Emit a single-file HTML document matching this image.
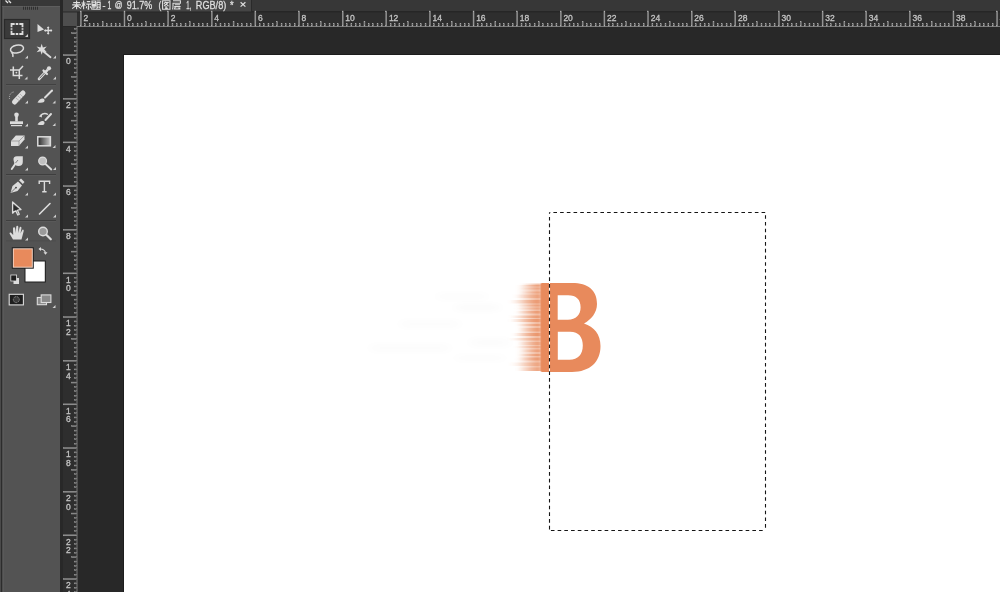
<!DOCTYPE html>
<html><head><meta charset="utf-8">
<style>
html,body{margin:0;padding:0;width:1000px;height:592px;overflow:hidden;background:#282828;}
body{position:relative;font-family:"Liberation Sans",sans-serif;}
svg{position:absolute;left:0;top:0;}
text{-webkit-font-smoothing:antialiased;}
</style></head><body>
<svg width="1000" height="592" viewBox="0 0 1000 592">
  <rect x="0" y="0" width="1000" height="592" fill="#282828"/>
  <rect x="123" y="54" width="877" height="538" fill="#1c1c1c"/>
  <rect x="124" y="55" width="876" height="537" fill="#ffffff"/>
<rect x="437" y="293" width="50" height="7" fill="#000" opacity="0.012" filter="url(#bl2)"/>
<rect x="455" y="304" width="45" height="7" fill="#000" opacity="0.014" filter="url(#bl2)"/>
<rect x="400" y="320" width="60" height="8" fill="#000" opacity="0.012" filter="url(#bl2)"/>
<rect x="370" y="344" width="80" height="8" fill="#000" opacity="0.01" filter="url(#bl2)"/>
<rect x="470" y="338" width="40" height="9" fill="#000" opacity="0.012" filter="url(#bl2)"/>
<rect x="455" y="355" width="50" height="6" fill="#000" opacity="0.012" filter="url(#bl2)"/>
<defs><linearGradient id="sm" x1="0" x2="1"><stop offset="0" stop-color="#e88a5c" stop-opacity="0"/><stop offset="0.4" stop-color="#e88a5c" stop-opacity="0.4"/><stop offset="0.75" stop-color="#e88a5c" stop-opacity="0.8"/><stop offset="1" stop-color="#e88a5c" stop-opacity="0.95"/></linearGradient><filter id="bl2" x="-50%" y="-100%" width="200%" height="300%"><feGaussianBlur stdDeviation="6 3"/></filter><filter id="bl" x="-20%" y="-50%" width="140%" height="200%"><feGaussianBlur stdDeviation="2 0.7"/></filter></defs>
<g filter="url(#bl)"><rect x="518" y="285" width="24" height="86" fill="url(#sm)" opacity="0.7"/><rect x="521.3" y="283.5" width="20.7" height="3" fill="url(#sm)" opacity="0.67"/><rect x="519.7" y="287.5" width="22.3" height="2" fill="url(#sm)" opacity="0.50"/><rect x="520.8" y="291.5" width="21.2" height="2" fill="url(#sm)" opacity="0.57"/><rect x="514.4" y="294.5" width="27.6" height="3.5" fill="url(#sm)" opacity="0.58"/><rect x="509.8" y="300.0" width="32.2" height="3.5" fill="url(#sm)" opacity="0.76"/><rect x="516.5" y="304.5" width="25.5" height="2" fill="url(#sm)" opacity="0.67"/><rect x="516.2" y="307.5" width="25.8" height="2" fill="url(#sm)" opacity="0.52"/><rect x="516.0" y="311.0" width="26.0" height="2.5" fill="url(#sm)" opacity="0.76"/><rect x="510.3" y="315.5" width="31.7" height="2.5" fill="url(#sm)" opacity="0.76"/><rect x="510.3" y="319.0" width="31.7" height="3" fill="url(#sm)" opacity="0.84"/><rect x="517.0" y="324.0" width="25.0" height="2" fill="url(#sm)" opacity="0.72"/><rect x="519.1" y="328.0" width="22.9" height="3.5" fill="url(#sm)" opacity="0.71"/><rect x="512.9" y="333.0" width="29.1" height="3" fill="url(#sm)" opacity="0.89"/><rect x="510.1" y="338.0" width="31.9" height="2.5" fill="url(#sm)" opacity="0.62"/><rect x="518.5" y="342.0" width="23.5" height="3" fill="url(#sm)" opacity="0.61"/><rect x="515.7" y="346.0" width="26.3" height="2" fill="url(#sm)" opacity="0.54"/><rect x="521.1" y="349.5" width="20.9" height="2.5" fill="url(#sm)" opacity="0.68"/><rect x="518.9" y="354.0" width="23.1" height="2" fill="url(#sm)" opacity="0.77"/><rect x="518.0" y="357.5" width="24.0" height="3" fill="url(#sm)" opacity="0.78"/><rect x="509.9" y="362.5" width="32.1" height="3.5" fill="url(#sm)" opacity="0.50"/><rect x="518.1" y="367.5" width="23.9" height="3.5" fill="url(#sm)" opacity="0.49"/></g>
<rect x="540.5" y="283.5" width="2" height="88" fill="#e88a5c" opacity="0.9"/>
<path d="M541.5,283 H572 C588,283 597,290 597,304 C597,313 591,319.5 584,323.5 C594,327 600.5,334 600.5,346 C600.5,362 590,371.9 572,371.9 H541.5 Z M557.7,295.2 H568 C576.5,295.2 580.6,299.5 580.6,307.3 C580.6,315 576,319.7 568,319.7 H557.7 Z M557.8,331.8 H570 C579,331.8 582.8,337.5 582.8,345.6 C582.8,354.5 578,359.8 569.5,359.8 H557.8 Z" fill="#e88a5c" fill-rule="evenodd"/>
  <rect x="549.5" y="212.5" width="216" height="318" fill="none" stroke="#ffffff" stroke-width="1"/>
  <g stroke="#151515" stroke-width="1.1" stroke-dasharray="3.6,3.115" fill="none">
    <path d="M549.5,212.5 H765.5" stroke-dashoffset="2.82"/>
    <path d="M549.5,212.5 V530.5" stroke-dashoffset="2.31"/>
    <path d="M765.5,212.5 V530.5" stroke-dashoffset="4.0"/>
    <path d="M549.5,530.5 H765.5" stroke-dashoffset="5.3"/>
  </g>

  <rect x="62" y="0" width="938" height="11" fill="#373737"/>
  <rect x="62" y="11" width="938" height="1.5" fill="#262626"/>
  <rect x="63" y="0" width="188" height="11.5" fill="#454545"/>
  <rect x="251" y="0" width="1" height="11.5" fill="#2a2a2a"/>
<defs><filter id="gs"><feColorMatrix type="identity"/></filter></defs>
<g filter="url(#gs)">
<path d="M73.2,2.6 H80 M72.2,4.9 H81 M76.6,0.6 V9.3 M76.4,5.2 L72.2,8.6 M76.8,5.2 L81,8.6" fill="none" stroke="#dedede" stroke-width="1.1"/>
<path d="M83.6,0.6 V9.3 M81.4,3 H85.6 M83.4,3.6 L81.4,7.2 M83.8,4 L85.4,5.6 M86.8,1.6 H90.2 M86.2,4.1 H91 M88.6,4.1 V9.2 L87.6,8.8 M87,6.2 L86.2,8.2 M90.2,6.2 L91,8" fill="none" stroke="#dedede" stroke-width="1.1"/>
<path d="M92,1 H95.6 V4.6 H92 Z M92,2.8 H95.6 M91.6,5.6 H96.2 M93.8,5.6 V8.6 M93.8,7 H95.8 M92.4,6.4 L91.6,9 Q94,9.4 100.6,9.1 M96.6,1 H100.6 M97,2.5 H100.2 V7 H97 Z M97,4.8 H100.2 M97.8,7.2 L96.6,8.6 M99.4,7.2 L100.6,8.6" fill="none" stroke="#dedede" stroke-width="1.1"/>
<path d="M162.6,0.8 H170 V9.2 H162.6 Z M165.5,1.8 L164,4 M165,2.5 H168 L164.2,6 M165.8,3.8 L168.6,6.2 M165.4,6.6 L167.4,7.2 M165,8 L167.8,8.6" fill="none" stroke="#dedede" stroke-width="1.1"/>
<path d="M173,0.8 H180.4 V3.2 H173 V6 Q173,8.5 172.4,9.3 M174.8,4.7 H180 M174.2,6.6 H180.6 M175.6,6.6 L174.4,9 H180.4 M178.6,7.8 L180.2,9" fill="none" stroke="#dedede" stroke-width="1.1"/>
<text x="102.6" y="9.2" font-family="Liberation Sans, sans-serif" font-size="10" fill="#dedede" stroke="#dedede" stroke-width="0.3" textLength="3.0" lengthAdjust="spacingAndGlyphs" >-</text>
<text x="107.6" y="9.2" font-family="Liberation Sans, sans-serif" font-size="10" fill="#dedede" stroke="#dedede" stroke-width="0.3" textLength="3.8" lengthAdjust="spacingAndGlyphs" >1</text>
<text x="114.8" y="8.2" font-family="Liberation Sans, sans-serif" font-size="9" fill="#dedede" stroke="#dedede" stroke-width="0.3" textLength="7.8" lengthAdjust="spacingAndGlyphs">@</text>
<text x="126.8" y="9.2" font-family="Liberation Sans, sans-serif" font-size="10" fill="#dedede" stroke="#dedede" stroke-width="0.3" textLength="25.5" lengthAdjust="spacingAndGlyphs" >91.7%</text>
<text x="158.6" y="9.2" font-family="Liberation Sans, sans-serif" font-size="10" fill="#dedede" stroke="#dedede" stroke-width="0.3" textLength="2.8" lengthAdjust="spacingAndGlyphs" >(</text>
<text x="186.2" y="9.2" font-family="Liberation Sans, sans-serif" font-size="10" fill="#dedede" stroke="#dedede" stroke-width="0.3" textLength="5.0" lengthAdjust="spacingAndGlyphs" >1,</text>
<text x="195.8" y="9.2" font-family="Liberation Sans, sans-serif" font-size="10" fill="#dedede" stroke="#dedede" stroke-width="0.3" textLength="30.5" lengthAdjust="spacingAndGlyphs" >RGB/8)</text>
<text x="230" y="8.5" font-family="Liberation Sans, sans-serif" font-size="10" fill="#dedede" stroke="#dedede" stroke-width="0.3" textLength="3.6" lengthAdjust="spacingAndGlyphs" >*</text>
<path d="M240.6,2.2 L245.4,6.6 M245.4,2.2 L240.6,6.6" stroke="#dedede" stroke-width="1.2"/>
</g>

  <rect x="63" y="12.5" width="937" height="13.5" fill="#2e2e2e"/>
  <rect x="63" y="12.5" width="14" height="13.5" fill="#4e4e4e"/>
  <rect x="77" y="26" width="923" height="1" fill="#7a7a7a"/>
  <rect x="63" y="27" width="13.5" height="565" fill="#2e2e2e"/>
  <rect x="76.5" y="26" width="1" height="566" fill="#7a7a7a"/>
  <g font-family="Liberation Sans, sans-serif" font-size="8.5" fill="#c4c4c4" stroke="#c4c4c4" stroke-width="0.3" filter="url(#gs)">
<rect x="80.37" y="11" width="1" height="15" fill="#858585"/>
<text x="83.47" y="21.2">2</text>
<rect x="84.73" y="23.8" width="1" height="2.2" fill="#5e5e5e"/>
<rect x="89.10" y="23.8" width="1" height="2.2" fill="#5e5e5e"/>
<rect x="93.46" y="23.8" width="1" height="2.2" fill="#5e5e5e"/>
<rect x="97.82" y="23.8" width="1" height="2.2" fill="#5e5e5e"/>
<rect x="102.19" y="21.5" width="1" height="4.5" fill="#6e6e6e"/>
<rect x="106.55" y="23.8" width="1" height="2.2" fill="#5e5e5e"/>
<rect x="110.91" y="23.8" width="1" height="2.2" fill="#5e5e5e"/>
<rect x="115.27" y="23.8" width="1" height="2.2" fill="#5e5e5e"/>
<rect x="119.64" y="23.8" width="1" height="2.2" fill="#5e5e5e"/>
<rect x="124.00" y="11" width="1" height="15" fill="#858585"/>
<text x="127.10" y="21.2">0</text>
<rect x="128.36" y="23.8" width="1" height="2.2" fill="#5e5e5e"/>
<rect x="132.73" y="23.8" width="1" height="2.2" fill="#5e5e5e"/>
<rect x="137.09" y="23.8" width="1" height="2.2" fill="#5e5e5e"/>
<rect x="141.45" y="23.8" width="1" height="2.2" fill="#5e5e5e"/>
<rect x="145.81" y="21.5" width="1" height="4.5" fill="#6e6e6e"/>
<rect x="150.18" y="23.8" width="1" height="2.2" fill="#5e5e5e"/>
<rect x="154.54" y="23.8" width="1" height="2.2" fill="#5e5e5e"/>
<rect x="158.90" y="23.8" width="1" height="2.2" fill="#5e5e5e"/>
<rect x="163.27" y="23.8" width="1" height="2.2" fill="#5e5e5e"/>
<rect x="167.63" y="11" width="1" height="15" fill="#858585"/>
<text x="170.73" y="21.2">2</text>
<rect x="171.99" y="23.8" width="1" height="2.2" fill="#5e5e5e"/>
<rect x="176.36" y="23.8" width="1" height="2.2" fill="#5e5e5e"/>
<rect x="180.72" y="23.8" width="1" height="2.2" fill="#5e5e5e"/>
<rect x="185.08" y="23.8" width="1" height="2.2" fill="#5e5e5e"/>
<rect x="189.44" y="21.5" width="1" height="4.5" fill="#6e6e6e"/>
<rect x="193.81" y="23.8" width="1" height="2.2" fill="#5e5e5e"/>
<rect x="198.17" y="23.8" width="1" height="2.2" fill="#5e5e5e"/>
<rect x="202.53" y="23.8" width="1" height="2.2" fill="#5e5e5e"/>
<rect x="206.90" y="23.8" width="1" height="2.2" fill="#5e5e5e"/>
<rect x="211.26" y="11" width="1" height="15" fill="#858585"/>
<text x="214.36" y="21.2">4</text>
<rect x="215.62" y="23.8" width="1" height="2.2" fill="#5e5e5e"/>
<rect x="219.99" y="23.8" width="1" height="2.2" fill="#5e5e5e"/>
<rect x="224.35" y="23.8" width="1" height="2.2" fill="#5e5e5e"/>
<rect x="228.71" y="23.8" width="1" height="2.2" fill="#5e5e5e"/>
<rect x="233.07" y="21.5" width="1" height="4.5" fill="#6e6e6e"/>
<rect x="237.44" y="23.8" width="1" height="2.2" fill="#5e5e5e"/>
<rect x="241.80" y="23.8" width="1" height="2.2" fill="#5e5e5e"/>
<rect x="246.16" y="23.8" width="1" height="2.2" fill="#5e5e5e"/>
<rect x="250.53" y="23.8" width="1" height="2.2" fill="#5e5e5e"/>
<rect x="254.89" y="11" width="1" height="15" fill="#858585"/>
<text x="257.99" y="21.2">6</text>
<rect x="259.25" y="23.8" width="1" height="2.2" fill="#5e5e5e"/>
<rect x="263.62" y="23.8" width="1" height="2.2" fill="#5e5e5e"/>
<rect x="267.98" y="23.8" width="1" height="2.2" fill="#5e5e5e"/>
<rect x="272.34" y="23.8" width="1" height="2.2" fill="#5e5e5e"/>
<rect x="276.71" y="21.5" width="1" height="4.5" fill="#6e6e6e"/>
<rect x="281.07" y="23.8" width="1" height="2.2" fill="#5e5e5e"/>
<rect x="285.43" y="23.8" width="1" height="2.2" fill="#5e5e5e"/>
<rect x="289.79" y="23.8" width="1" height="2.2" fill="#5e5e5e"/>
<rect x="294.16" y="23.8" width="1" height="2.2" fill="#5e5e5e"/>
<rect x="298.52" y="11" width="1" height="15" fill="#858585"/>
<text x="301.62" y="21.2">8</text>
<rect x="302.88" y="23.8" width="1" height="2.2" fill="#5e5e5e"/>
<rect x="307.25" y="23.8" width="1" height="2.2" fill="#5e5e5e"/>
<rect x="311.61" y="23.8" width="1" height="2.2" fill="#5e5e5e"/>
<rect x="315.97" y="23.8" width="1" height="2.2" fill="#5e5e5e"/>
<rect x="320.34" y="21.5" width="1" height="4.5" fill="#6e6e6e"/>
<rect x="324.70" y="23.8" width="1" height="2.2" fill="#5e5e5e"/>
<rect x="329.06" y="23.8" width="1" height="2.2" fill="#5e5e5e"/>
<rect x="333.42" y="23.8" width="1" height="2.2" fill="#5e5e5e"/>
<rect x="337.79" y="23.8" width="1" height="2.2" fill="#5e5e5e"/>
<rect x="342.15" y="11" width="1" height="15" fill="#858585"/>
<text x="345.25" y="21.2">10</text>
<rect x="346.51" y="23.8" width="1" height="2.2" fill="#5e5e5e"/>
<rect x="350.88" y="23.8" width="1" height="2.2" fill="#5e5e5e"/>
<rect x="355.24" y="23.8" width="1" height="2.2" fill="#5e5e5e"/>
<rect x="359.60" y="23.8" width="1" height="2.2" fill="#5e5e5e"/>
<rect x="363.97" y="21.5" width="1" height="4.5" fill="#6e6e6e"/>
<rect x="368.33" y="23.8" width="1" height="2.2" fill="#5e5e5e"/>
<rect x="372.69" y="23.8" width="1" height="2.2" fill="#5e5e5e"/>
<rect x="377.05" y="23.8" width="1" height="2.2" fill="#5e5e5e"/>
<rect x="381.42" y="23.8" width="1" height="2.2" fill="#5e5e5e"/>
<rect x="385.78" y="11" width="1" height="15" fill="#858585"/>
<text x="388.88" y="21.2">12</text>
<rect x="390.14" y="23.8" width="1" height="2.2" fill="#5e5e5e"/>
<rect x="394.51" y="23.8" width="1" height="2.2" fill="#5e5e5e"/>
<rect x="398.87" y="23.8" width="1" height="2.2" fill="#5e5e5e"/>
<rect x="403.23" y="23.8" width="1" height="2.2" fill="#5e5e5e"/>
<rect x="407.60" y="21.5" width="1" height="4.5" fill="#6e6e6e"/>
<rect x="411.96" y="23.8" width="1" height="2.2" fill="#5e5e5e"/>
<rect x="416.32" y="23.8" width="1" height="2.2" fill="#5e5e5e"/>
<rect x="420.68" y="23.8" width="1" height="2.2" fill="#5e5e5e"/>
<rect x="425.05" y="23.8" width="1" height="2.2" fill="#5e5e5e"/>
<rect x="429.41" y="11" width="1" height="15" fill="#858585"/>
<text x="432.51" y="21.2">14</text>
<rect x="433.77" y="23.8" width="1" height="2.2" fill="#5e5e5e"/>
<rect x="438.14" y="23.8" width="1" height="2.2" fill="#5e5e5e"/>
<rect x="442.50" y="23.8" width="1" height="2.2" fill="#5e5e5e"/>
<rect x="446.86" y="23.8" width="1" height="2.2" fill="#5e5e5e"/>
<rect x="451.23" y="21.5" width="1" height="4.5" fill="#6e6e6e"/>
<rect x="455.59" y="23.8" width="1" height="2.2" fill="#5e5e5e"/>
<rect x="459.95" y="23.8" width="1" height="2.2" fill="#5e5e5e"/>
<rect x="464.31" y="23.8" width="1" height="2.2" fill="#5e5e5e"/>
<rect x="468.68" y="23.8" width="1" height="2.2" fill="#5e5e5e"/>
<rect x="473.04" y="11" width="1" height="15" fill="#858585"/>
<text x="476.14" y="21.2">16</text>
<rect x="477.40" y="23.8" width="1" height="2.2" fill="#5e5e5e"/>
<rect x="481.77" y="23.8" width="1" height="2.2" fill="#5e5e5e"/>
<rect x="486.13" y="23.8" width="1" height="2.2" fill="#5e5e5e"/>
<rect x="490.49" y="23.8" width="1" height="2.2" fill="#5e5e5e"/>
<rect x="494.86" y="21.5" width="1" height="4.5" fill="#6e6e6e"/>
<rect x="499.22" y="23.8" width="1" height="2.2" fill="#5e5e5e"/>
<rect x="503.58" y="23.8" width="1" height="2.2" fill="#5e5e5e"/>
<rect x="507.94" y="23.8" width="1" height="2.2" fill="#5e5e5e"/>
<rect x="512.31" y="23.8" width="1" height="2.2" fill="#5e5e5e"/>
<rect x="516.67" y="11" width="1" height="15" fill="#858585"/>
<text x="519.77" y="21.2">18</text>
<rect x="521.03" y="23.8" width="1" height="2.2" fill="#5e5e5e"/>
<rect x="525.40" y="23.8" width="1" height="2.2" fill="#5e5e5e"/>
<rect x="529.76" y="23.8" width="1" height="2.2" fill="#5e5e5e"/>
<rect x="534.12" y="23.8" width="1" height="2.2" fill="#5e5e5e"/>
<rect x="538.49" y="21.5" width="1" height="4.5" fill="#6e6e6e"/>
<rect x="542.85" y="23.8" width="1" height="2.2" fill="#5e5e5e"/>
<rect x="547.21" y="23.8" width="1" height="2.2" fill="#5e5e5e"/>
<rect x="551.57" y="23.8" width="1" height="2.2" fill="#5e5e5e"/>
<rect x="555.94" y="23.8" width="1" height="2.2" fill="#5e5e5e"/>
<rect x="560.30" y="11" width="1" height="15" fill="#858585"/>
<text x="563.40" y="21.2">20</text>
<rect x="564.66" y="23.8" width="1" height="2.2" fill="#5e5e5e"/>
<rect x="569.03" y="23.8" width="1" height="2.2" fill="#5e5e5e"/>
<rect x="573.39" y="23.8" width="1" height="2.2" fill="#5e5e5e"/>
<rect x="577.75" y="23.8" width="1" height="2.2" fill="#5e5e5e"/>
<rect x="582.12" y="21.5" width="1" height="4.5" fill="#6e6e6e"/>
<rect x="586.48" y="23.8" width="1" height="2.2" fill="#5e5e5e"/>
<rect x="590.84" y="23.8" width="1" height="2.2" fill="#5e5e5e"/>
<rect x="595.20" y="23.8" width="1" height="2.2" fill="#5e5e5e"/>
<rect x="599.57" y="23.8" width="1" height="2.2" fill="#5e5e5e"/>
<rect x="603.93" y="11" width="1" height="15" fill="#858585"/>
<text x="607.03" y="21.2">22</text>
<rect x="608.29" y="23.8" width="1" height="2.2" fill="#5e5e5e"/>
<rect x="612.66" y="23.8" width="1" height="2.2" fill="#5e5e5e"/>
<rect x="617.02" y="23.8" width="1" height="2.2" fill="#5e5e5e"/>
<rect x="621.38" y="23.8" width="1" height="2.2" fill="#5e5e5e"/>
<rect x="625.75" y="21.5" width="1" height="4.5" fill="#6e6e6e"/>
<rect x="630.11" y="23.8" width="1" height="2.2" fill="#5e5e5e"/>
<rect x="634.47" y="23.8" width="1" height="2.2" fill="#5e5e5e"/>
<rect x="638.83" y="23.8" width="1" height="2.2" fill="#5e5e5e"/>
<rect x="643.20" y="23.8" width="1" height="2.2" fill="#5e5e5e"/>
<rect x="647.56" y="11" width="1" height="15" fill="#858585"/>
<text x="650.66" y="21.2">24</text>
<rect x="651.92" y="23.8" width="1" height="2.2" fill="#5e5e5e"/>
<rect x="656.29" y="23.8" width="1" height="2.2" fill="#5e5e5e"/>
<rect x="660.65" y="23.8" width="1" height="2.2" fill="#5e5e5e"/>
<rect x="665.01" y="23.8" width="1" height="2.2" fill="#5e5e5e"/>
<rect x="669.38" y="21.5" width="1" height="4.5" fill="#6e6e6e"/>
<rect x="673.74" y="23.8" width="1" height="2.2" fill="#5e5e5e"/>
<rect x="678.10" y="23.8" width="1" height="2.2" fill="#5e5e5e"/>
<rect x="682.46" y="23.8" width="1" height="2.2" fill="#5e5e5e"/>
<rect x="686.83" y="23.8" width="1" height="2.2" fill="#5e5e5e"/>
<rect x="691.19" y="11" width="1" height="15" fill="#858585"/>
<text x="694.29" y="21.2">26</text>
<rect x="695.55" y="23.8" width="1" height="2.2" fill="#5e5e5e"/>
<rect x="699.92" y="23.8" width="1" height="2.2" fill="#5e5e5e"/>
<rect x="704.28" y="23.8" width="1" height="2.2" fill="#5e5e5e"/>
<rect x="708.64" y="23.8" width="1" height="2.2" fill="#5e5e5e"/>
<rect x="713.00" y="21.5" width="1" height="4.5" fill="#6e6e6e"/>
<rect x="717.37" y="23.8" width="1" height="2.2" fill="#5e5e5e"/>
<rect x="721.73" y="23.8" width="1" height="2.2" fill="#5e5e5e"/>
<rect x="726.09" y="23.8" width="1" height="2.2" fill="#5e5e5e"/>
<rect x="730.46" y="23.8" width="1" height="2.2" fill="#5e5e5e"/>
<rect x="734.82" y="11" width="1" height="15" fill="#858585"/>
<text x="737.92" y="21.2">28</text>
<rect x="739.18" y="23.8" width="1" height="2.2" fill="#5e5e5e"/>
<rect x="743.55" y="23.8" width="1" height="2.2" fill="#5e5e5e"/>
<rect x="747.91" y="23.8" width="1" height="2.2" fill="#5e5e5e"/>
<rect x="752.27" y="23.8" width="1" height="2.2" fill="#5e5e5e"/>
<rect x="756.63" y="21.5" width="1" height="4.5" fill="#6e6e6e"/>
<rect x="761.00" y="23.8" width="1" height="2.2" fill="#5e5e5e"/>
<rect x="765.36" y="23.8" width="1" height="2.2" fill="#5e5e5e"/>
<rect x="769.72" y="23.8" width="1" height="2.2" fill="#5e5e5e"/>
<rect x="774.09" y="23.8" width="1" height="2.2" fill="#5e5e5e"/>
<rect x="778.45" y="11" width="1" height="15" fill="#858585"/>
<text x="781.55" y="21.2">30</text>
<rect x="782.81" y="23.8" width="1" height="2.2" fill="#5e5e5e"/>
<rect x="787.18" y="23.8" width="1" height="2.2" fill="#5e5e5e"/>
<rect x="791.54" y="23.8" width="1" height="2.2" fill="#5e5e5e"/>
<rect x="795.90" y="23.8" width="1" height="2.2" fill="#5e5e5e"/>
<rect x="800.27" y="21.5" width="1" height="4.5" fill="#6e6e6e"/>
<rect x="804.63" y="23.8" width="1" height="2.2" fill="#5e5e5e"/>
<rect x="808.99" y="23.8" width="1" height="2.2" fill="#5e5e5e"/>
<rect x="813.35" y="23.8" width="1" height="2.2" fill="#5e5e5e"/>
<rect x="817.72" y="23.8" width="1" height="2.2" fill="#5e5e5e"/>
<rect x="822.08" y="11" width="1" height="15" fill="#858585"/>
<text x="825.18" y="21.2">32</text>
<rect x="826.44" y="23.8" width="1" height="2.2" fill="#5e5e5e"/>
<rect x="830.81" y="23.8" width="1" height="2.2" fill="#5e5e5e"/>
<rect x="835.17" y="23.8" width="1" height="2.2" fill="#5e5e5e"/>
<rect x="839.53" y="23.8" width="1" height="2.2" fill="#5e5e5e"/>
<rect x="843.90" y="21.5" width="1" height="4.5" fill="#6e6e6e"/>
<rect x="848.26" y="23.8" width="1" height="2.2" fill="#5e5e5e"/>
<rect x="852.62" y="23.8" width="1" height="2.2" fill="#5e5e5e"/>
<rect x="856.98" y="23.8" width="1" height="2.2" fill="#5e5e5e"/>
<rect x="861.35" y="23.8" width="1" height="2.2" fill="#5e5e5e"/>
<rect x="865.71" y="11" width="1" height="15" fill="#858585"/>
<text x="868.81" y="21.2">34</text>
<rect x="870.07" y="23.8" width="1" height="2.2" fill="#5e5e5e"/>
<rect x="874.44" y="23.8" width="1" height="2.2" fill="#5e5e5e"/>
<rect x="878.80" y="23.8" width="1" height="2.2" fill="#5e5e5e"/>
<rect x="883.16" y="23.8" width="1" height="2.2" fill="#5e5e5e"/>
<rect x="887.52" y="21.5" width="1" height="4.5" fill="#6e6e6e"/>
<rect x="891.89" y="23.8" width="1" height="2.2" fill="#5e5e5e"/>
<rect x="896.25" y="23.8" width="1" height="2.2" fill="#5e5e5e"/>
<rect x="900.61" y="23.8" width="1" height="2.2" fill="#5e5e5e"/>
<rect x="904.98" y="23.8" width="1" height="2.2" fill="#5e5e5e"/>
<rect x="909.34" y="11" width="1" height="15" fill="#858585"/>
<text x="912.44" y="21.2">36</text>
<rect x="913.70" y="23.8" width="1" height="2.2" fill="#5e5e5e"/>
<rect x="918.07" y="23.8" width="1" height="2.2" fill="#5e5e5e"/>
<rect x="922.43" y="23.8" width="1" height="2.2" fill="#5e5e5e"/>
<rect x="926.79" y="23.8" width="1" height="2.2" fill="#5e5e5e"/>
<rect x="931.15" y="21.5" width="1" height="4.5" fill="#6e6e6e"/>
<rect x="935.52" y="23.8" width="1" height="2.2" fill="#5e5e5e"/>
<rect x="939.88" y="23.8" width="1" height="2.2" fill="#5e5e5e"/>
<rect x="944.24" y="23.8" width="1" height="2.2" fill="#5e5e5e"/>
<rect x="948.61" y="23.8" width="1" height="2.2" fill="#5e5e5e"/>
<rect x="952.97" y="11" width="1" height="15" fill="#858585"/>
<text x="956.07" y="21.2">38</text>
<rect x="957.33" y="23.8" width="1" height="2.2" fill="#5e5e5e"/>
<rect x="961.70" y="23.8" width="1" height="2.2" fill="#5e5e5e"/>
<rect x="966.06" y="23.8" width="1" height="2.2" fill="#5e5e5e"/>
<rect x="970.42" y="23.8" width="1" height="2.2" fill="#5e5e5e"/>
<rect x="974.79" y="21.5" width="1" height="4.5" fill="#6e6e6e"/>
<rect x="979.15" y="23.8" width="1" height="2.2" fill="#5e5e5e"/>
<rect x="983.51" y="23.8" width="1" height="2.2" fill="#5e5e5e"/>
<rect x="987.87" y="23.8" width="1" height="2.2" fill="#5e5e5e"/>
<rect x="992.24" y="23.8" width="1" height="2.2" fill="#5e5e5e"/>
<rect x="996.60" y="11" width="1" height="15" fill="#858585"/>
<text x="999.70" y="21.2">40</text>
<rect x="74.3" y="28.40" width="2.2" height="1" fill="#5e5e5e"/>
<rect x="71.5" y="32.77" width="5" height="1" fill="#6e6e6e"/>
<rect x="74.3" y="37.14" width="2.2" height="1" fill="#5e5e5e"/>
<rect x="74.3" y="41.50" width="2.2" height="1" fill="#5e5e5e"/>
<rect x="74.3" y="45.87" width="2.2" height="1" fill="#5e5e5e"/>
<rect x="74.3" y="50.23" width="2.2" height="1" fill="#5e5e5e"/>
<rect x="63" y="54.60" width="13.5" height="1" fill="#7e7e7e"/>
<text x="68.3" y="64.30" text-anchor="middle">0</text>
<rect x="74.3" y="58.97" width="2.2" height="1" fill="#5e5e5e"/>
<rect x="74.3" y="63.33" width="2.2" height="1" fill="#5e5e5e"/>
<rect x="74.3" y="67.70" width="2.2" height="1" fill="#5e5e5e"/>
<rect x="74.3" y="72.06" width="2.2" height="1" fill="#5e5e5e"/>
<rect x="71.5" y="76.43" width="5" height="1" fill="#6e6e6e"/>
<rect x="74.3" y="80.80" width="2.2" height="1" fill="#5e5e5e"/>
<rect x="74.3" y="85.16" width="2.2" height="1" fill="#5e5e5e"/>
<rect x="74.3" y="89.53" width="2.2" height="1" fill="#5e5e5e"/>
<rect x="74.3" y="93.89" width="2.2" height="1" fill="#5e5e5e"/>
<rect x="63" y="98.26" width="13.5" height="1" fill="#7e7e7e"/>
<text x="68.3" y="107.96" text-anchor="middle">2</text>
<rect x="74.3" y="102.63" width="2.2" height="1" fill="#5e5e5e"/>
<rect x="74.3" y="106.99" width="2.2" height="1" fill="#5e5e5e"/>
<rect x="74.3" y="111.36" width="2.2" height="1" fill="#5e5e5e"/>
<rect x="74.3" y="115.72" width="2.2" height="1" fill="#5e5e5e"/>
<rect x="71.5" y="120.09" width="5" height="1" fill="#6e6e6e"/>
<rect x="74.3" y="124.46" width="2.2" height="1" fill="#5e5e5e"/>
<rect x="74.3" y="128.82" width="2.2" height="1" fill="#5e5e5e"/>
<rect x="74.3" y="133.19" width="2.2" height="1" fill="#5e5e5e"/>
<rect x="74.3" y="137.55" width="2.2" height="1" fill="#5e5e5e"/>
<rect x="63" y="141.92" width="13.5" height="1" fill="#7e7e7e"/>
<text x="68.3" y="151.62" text-anchor="middle">4</text>
<rect x="74.3" y="146.29" width="2.2" height="1" fill="#5e5e5e"/>
<rect x="74.3" y="150.65" width="2.2" height="1" fill="#5e5e5e"/>
<rect x="74.3" y="155.02" width="2.2" height="1" fill="#5e5e5e"/>
<rect x="74.3" y="159.38" width="2.2" height="1" fill="#5e5e5e"/>
<rect x="71.5" y="163.75" width="5" height="1" fill="#6e6e6e"/>
<rect x="74.3" y="168.12" width="2.2" height="1" fill="#5e5e5e"/>
<rect x="74.3" y="172.48" width="2.2" height="1" fill="#5e5e5e"/>
<rect x="74.3" y="176.85" width="2.2" height="1" fill="#5e5e5e"/>
<rect x="74.3" y="181.21" width="2.2" height="1" fill="#5e5e5e"/>
<rect x="63" y="185.58" width="13.5" height="1" fill="#7e7e7e"/>
<text x="68.3" y="195.28" text-anchor="middle">6</text>
<rect x="74.3" y="189.95" width="2.2" height="1" fill="#5e5e5e"/>
<rect x="74.3" y="194.31" width="2.2" height="1" fill="#5e5e5e"/>
<rect x="74.3" y="198.68" width="2.2" height="1" fill="#5e5e5e"/>
<rect x="74.3" y="203.04" width="2.2" height="1" fill="#5e5e5e"/>
<rect x="71.5" y="207.41" width="5" height="1" fill="#6e6e6e"/>
<rect x="74.3" y="211.78" width="2.2" height="1" fill="#5e5e5e"/>
<rect x="74.3" y="216.14" width="2.2" height="1" fill="#5e5e5e"/>
<rect x="74.3" y="220.51" width="2.2" height="1" fill="#5e5e5e"/>
<rect x="74.3" y="224.87" width="2.2" height="1" fill="#5e5e5e"/>
<rect x="63" y="229.24" width="13.5" height="1" fill="#7e7e7e"/>
<text x="68.3" y="238.94" text-anchor="middle">8</text>
<rect x="74.3" y="233.61" width="2.2" height="1" fill="#5e5e5e"/>
<rect x="74.3" y="237.97" width="2.2" height="1" fill="#5e5e5e"/>
<rect x="74.3" y="242.34" width="2.2" height="1" fill="#5e5e5e"/>
<rect x="74.3" y="246.70" width="2.2" height="1" fill="#5e5e5e"/>
<rect x="71.5" y="251.07" width="5" height="1" fill="#6e6e6e"/>
<rect x="74.3" y="255.44" width="2.2" height="1" fill="#5e5e5e"/>
<rect x="74.3" y="259.80" width="2.2" height="1" fill="#5e5e5e"/>
<rect x="74.3" y="264.17" width="2.2" height="1" fill="#5e5e5e"/>
<rect x="74.3" y="268.53" width="2.2" height="1" fill="#5e5e5e"/>
<rect x="63" y="272.90" width="13.5" height="1" fill="#7e7e7e"/>
<text x="68.3" y="282.60" text-anchor="middle">1</text>
<text x="68.3" y="291.20" text-anchor="middle">0</text>
<rect x="74.3" y="277.27" width="2.2" height="1" fill="#5e5e5e"/>
<rect x="74.3" y="281.63" width="2.2" height="1" fill="#5e5e5e"/>
<rect x="74.3" y="286.00" width="2.2" height="1" fill="#5e5e5e"/>
<rect x="74.3" y="290.36" width="2.2" height="1" fill="#5e5e5e"/>
<rect x="71.5" y="294.73" width="5" height="1" fill="#6e6e6e"/>
<rect x="74.3" y="299.10" width="2.2" height="1" fill="#5e5e5e"/>
<rect x="74.3" y="303.46" width="2.2" height="1" fill="#5e5e5e"/>
<rect x="74.3" y="307.83" width="2.2" height="1" fill="#5e5e5e"/>
<rect x="74.3" y="312.19" width="2.2" height="1" fill="#5e5e5e"/>
<rect x="63" y="316.56" width="13.5" height="1" fill="#7e7e7e"/>
<text x="68.3" y="326.26" text-anchor="middle">1</text>
<text x="68.3" y="334.86" text-anchor="middle">2</text>
<rect x="74.3" y="320.93" width="2.2" height="1" fill="#5e5e5e"/>
<rect x="74.3" y="325.29" width="2.2" height="1" fill="#5e5e5e"/>
<rect x="74.3" y="329.66" width="2.2" height="1" fill="#5e5e5e"/>
<rect x="74.3" y="334.02" width="2.2" height="1" fill="#5e5e5e"/>
<rect x="71.5" y="338.39" width="5" height="1" fill="#6e6e6e"/>
<rect x="74.3" y="342.76" width="2.2" height="1" fill="#5e5e5e"/>
<rect x="74.3" y="347.12" width="2.2" height="1" fill="#5e5e5e"/>
<rect x="74.3" y="351.49" width="2.2" height="1" fill="#5e5e5e"/>
<rect x="74.3" y="355.85" width="2.2" height="1" fill="#5e5e5e"/>
<rect x="63" y="360.22" width="13.5" height="1" fill="#7e7e7e"/>
<text x="68.3" y="369.92" text-anchor="middle">1</text>
<text x="68.3" y="378.52" text-anchor="middle">4</text>
<rect x="74.3" y="364.59" width="2.2" height="1" fill="#5e5e5e"/>
<rect x="74.3" y="368.95" width="2.2" height="1" fill="#5e5e5e"/>
<rect x="74.3" y="373.32" width="2.2" height="1" fill="#5e5e5e"/>
<rect x="74.3" y="377.68" width="2.2" height="1" fill="#5e5e5e"/>
<rect x="71.5" y="382.05" width="5" height="1" fill="#6e6e6e"/>
<rect x="74.3" y="386.42" width="2.2" height="1" fill="#5e5e5e"/>
<rect x="74.3" y="390.78" width="2.2" height="1" fill="#5e5e5e"/>
<rect x="74.3" y="395.15" width="2.2" height="1" fill="#5e5e5e"/>
<rect x="74.3" y="399.51" width="2.2" height="1" fill="#5e5e5e"/>
<rect x="63" y="403.88" width="13.5" height="1" fill="#7e7e7e"/>
<text x="68.3" y="413.58" text-anchor="middle">1</text>
<text x="68.3" y="422.18" text-anchor="middle">6</text>
<rect x="74.3" y="408.25" width="2.2" height="1" fill="#5e5e5e"/>
<rect x="74.3" y="412.61" width="2.2" height="1" fill="#5e5e5e"/>
<rect x="74.3" y="416.98" width="2.2" height="1" fill="#5e5e5e"/>
<rect x="74.3" y="421.34" width="2.2" height="1" fill="#5e5e5e"/>
<rect x="71.5" y="425.71" width="5" height="1" fill="#6e6e6e"/>
<rect x="74.3" y="430.08" width="2.2" height="1" fill="#5e5e5e"/>
<rect x="74.3" y="434.44" width="2.2" height="1" fill="#5e5e5e"/>
<rect x="74.3" y="438.81" width="2.2" height="1" fill="#5e5e5e"/>
<rect x="74.3" y="443.17" width="2.2" height="1" fill="#5e5e5e"/>
<rect x="63" y="447.54" width="13.5" height="1" fill="#7e7e7e"/>
<text x="68.3" y="457.24" text-anchor="middle">1</text>
<text x="68.3" y="465.84" text-anchor="middle">8</text>
<rect x="74.3" y="451.91" width="2.2" height="1" fill="#5e5e5e"/>
<rect x="74.3" y="456.27" width="2.2" height="1" fill="#5e5e5e"/>
<rect x="74.3" y="460.64" width="2.2" height="1" fill="#5e5e5e"/>
<rect x="74.3" y="465.00" width="2.2" height="1" fill="#5e5e5e"/>
<rect x="71.5" y="469.37" width="5" height="1" fill="#6e6e6e"/>
<rect x="74.3" y="473.74" width="2.2" height="1" fill="#5e5e5e"/>
<rect x="74.3" y="478.10" width="2.2" height="1" fill="#5e5e5e"/>
<rect x="74.3" y="482.47" width="2.2" height="1" fill="#5e5e5e"/>
<rect x="74.3" y="486.83" width="2.2" height="1" fill="#5e5e5e"/>
<rect x="63" y="491.20" width="13.5" height="1" fill="#7e7e7e"/>
<text x="68.3" y="500.90" text-anchor="middle">2</text>
<text x="68.3" y="509.50" text-anchor="middle">0</text>
<rect x="74.3" y="495.57" width="2.2" height="1" fill="#5e5e5e"/>
<rect x="74.3" y="499.93" width="2.2" height="1" fill="#5e5e5e"/>
<rect x="74.3" y="504.30" width="2.2" height="1" fill="#5e5e5e"/>
<rect x="74.3" y="508.66" width="2.2" height="1" fill="#5e5e5e"/>
<rect x="71.5" y="513.03" width="5" height="1" fill="#6e6e6e"/>
<rect x="74.3" y="517.40" width="2.2" height="1" fill="#5e5e5e"/>
<rect x="74.3" y="521.76" width="2.2" height="1" fill="#5e5e5e"/>
<rect x="74.3" y="526.13" width="2.2" height="1" fill="#5e5e5e"/>
<rect x="74.3" y="530.49" width="2.2" height="1" fill="#5e5e5e"/>
<rect x="63" y="534.86" width="13.5" height="1" fill="#7e7e7e"/>
<text x="68.3" y="544.56" text-anchor="middle">2</text>
<text x="68.3" y="553.16" text-anchor="middle">2</text>
<rect x="74.3" y="539.23" width="2.2" height="1" fill="#5e5e5e"/>
<rect x="74.3" y="543.59" width="2.2" height="1" fill="#5e5e5e"/>
<rect x="74.3" y="547.96" width="2.2" height="1" fill="#5e5e5e"/>
<rect x="74.3" y="552.32" width="2.2" height="1" fill="#5e5e5e"/>
<rect x="71.5" y="556.69" width="5" height="1" fill="#6e6e6e"/>
<rect x="74.3" y="561.06" width="2.2" height="1" fill="#5e5e5e"/>
<rect x="74.3" y="565.42" width="2.2" height="1" fill="#5e5e5e"/>
<rect x="74.3" y="569.79" width="2.2" height="1" fill="#5e5e5e"/>
<rect x="74.3" y="574.15" width="2.2" height="1" fill="#5e5e5e"/>
<rect x="63" y="578.52" width="13.5" height="1" fill="#7e7e7e"/>
<text x="68.3" y="588.22" text-anchor="middle">2</text>
<text x="68.3" y="596.82" text-anchor="middle">4</text>
<rect x="74.3" y="582.89" width="2.2" height="1" fill="#5e5e5e"/>
<rect x="74.3" y="587.25" width="2.2" height="1" fill="#5e5e5e"/>
<rect x="74.3" y="591.62" width="2.2" height="1" fill="#5e5e5e"/>
<rect x="74.3" y="595.98" width="2.2" height="1" fill="#5e5e5e"/>
  </g>

  <rect x="0" y="0" width="62" height="592" fill="#535353"/>
  <rect x="0" y="0" width="1" height="592" fill="#4a4a4a"/>
  <rect x="1" y="0" width="1.2" height="592" fill="#2c2c2c"/><rect x="2.8" y="7" width="1" height="585" fill="#5b5b5b"/>
  <rect x="60" y="0" width="3" height="592" fill="#282828"/>
  <rect x="2" y="0" width="58" height="6" fill="#383838"/>
  <rect x="2" y="6" width="58" height="1" fill="#5e5e5e"/>
  <path d="M5.5,0.5 L8,3 M8.5,0.5 L11,3" stroke="#e6e6e6" stroke-width="1.3"/>
  <path d="M23,8.2 h16" stroke="#2f2f2f" stroke-width="3" stroke-dasharray="1,1"/>
<rect x="4.5" y="19.5" width="25" height="19" fill="#3a3a3a" stroke="#2a2a2a" stroke-width="1.2"/>
<path d="M11.5,27.2 V24 H14.7 M15.7,24 H18.3 M19.3,24 H22.5 V27.2 M22.5,28.2 V29.8 M22.5,30.8 V34 H19.3 M18.3,34 H15.7 M14.7,34 H11.5 V30.8 M11.5,29.8 V28.2" fill="none" stroke="#dcdcdc" stroke-width="1.8"/>
<path d="M28,34.0 L28,37.0 L25,37.0 Z" fill="#d0d0d0"/>
<path d="M37.5,24 L44,29.5 L37.5,32 Z" fill="#dcdcdc"/>
<path d="M48.2,27 V34 M44.7,30.5 H51.7" stroke="#dcdcdc" stroke-width="1.3"/>
<path d="M48.2,26.3 l-1.4,1.6 h2.8 z M48.2,34.7 l-1.4,-1.6 h2.8 z M44,30.5 l1.6,-1.4 v2.8 z M52.4,30.5 l-1.6,-1.4 v2.8 z" fill="#dcdcdc"/>
<ellipse cx="17" cy="49" rx="6.6" ry="3.9" transform="rotate(-12 17 49)" fill="none" stroke="#dcdcdc" stroke-width="1.5"/>
<path d="M11.5,52.5 Q13.5,54 12.8,57" fill="none" stroke="#dcdcdc" stroke-width="1.4"/>
<path d="M28,55.5 L28,58.5 L25,58.5 Z" fill="#d0d0d0"/>
<path d="M41.7,43.8 L42.9,47.4 L46.8,46.5 L44.2,49.3 L46.8,52.2 L42.9,51.2 L41.7,54.8 L40.5,51.2 L36.6,52.2 L39.2,49.3 L36.6,46.5 L40.5,47.4 Z" fill="#dcdcdc"/>
<path d="M43.5,51.5 L50.5,57.3" stroke="#dcdcdc" stroke-width="1.8" stroke-linecap="round"/>
<path d="M56,55.5 L56,58.5 L53,58.5 Z" fill="#d0d0d0"/>
<path d="M13.3,66.5 V75.5 H22.5 M10,69.9 H19.3 V79 M19.3,69.9 L23,66" fill="none" stroke="#dcdcdc" stroke-width="1.5"/>
<circle cx="16.4" cy="72.6" r="0.9" fill="#dcdcdc"/>
<path d="M27.5,76.5 L27.5,79.5 L24.5,79.5 Z" fill="#d0d0d0"/>
<path d="M39,79 L45.5,72" stroke="#dcdcdc" stroke-width="2.6" stroke-linecap="round"/>
<path d="M39.6,78.3 L45,72.5" stroke="#555" stroke-width="0.9"/>
<path d="M43.5,70.5 L47,74" stroke="#dcdcdc" stroke-width="2.2" stroke-linecap="round"/>
<circle cx="49" cy="68.3" r="2.1" fill="#dcdcdc"/><path d="M47.8,69.6 L45.7,71.8" stroke="#dcdcdc" stroke-width="2.5"/>
<path d="M56,76.5 L56,79.5 L53,79.5 Z" fill="#d0d0d0"/>
<rect x="6" y="84.2" width="50" height="1" fill="#3e3e3e"/><rect x="6" y="85.2" width="50" height="0.8" fill="#5c5c5c"/>
<path d="M14.5,102 L23,93" stroke="#dcdcdc" stroke-width="5" stroke-linecap="round"/>
<path d="M16,98 L19.5,101 M18,96 L21.5,99 M20,94 L23,97" stroke="#9a9a9a" stroke-width="0.6"/>
<path d="M13.5,92 Q9,93 9.5,99" fill="none" stroke="#bcbcbc" stroke-width="1" stroke-dasharray="1,1"/>
<path d="M28,100.5 L28,103.5 L25,103.5 Z" fill="#d0d0d0"/>
<path d="M45,97.5 L52,90.5" stroke="#dcdcdc" stroke-width="2" stroke-linecap="round"/>
<path d="M37.5,102.5 Q40,98 43,98.5 Q45.5,99.5 44,102 Q42,103.3 37.5,102.5 Z" fill="#dcdcdc"/>
<path d="M55.5,100.5 L55.5,103.5 L52.5,103.5 Z" fill="#d0d0d0"/>
<circle cx="16.5" cy="114.8" r="2.3" fill="#dcdcdc"/>
<rect x="15.2" y="116" width="2.6" height="5.5" fill="#dcdcdc"/>
<rect x="10" y="121.3" width="13" height="2.8" fill="#dcdcdc"/>
<rect x="11" y="125" width="11" height="1.2" fill="#dcdcdc"/>
<path d="M28,123.5 L28,126.5 L25,126.5 Z" fill="#d0d0d0"/>
<path d="M40.5,115.5 Q44,112 48,114.5" fill="none" stroke="#dcdcdc" stroke-width="1.3"/>
<path d="M38.8,116.3 L42,114 L41.8,117.5 Z" fill="#dcdcdc"/>
<path d="M45.5,120 L51,114" stroke="#dcdcdc" stroke-width="2" stroke-linecap="round"/>
<path d="M37.5,124.5 Q40,120.5 43,121 Q45.5,122 44,124.5 Q42,125.5 37.5,124.5 Z" fill="#dcdcdc"/>
<path d="M55.5,123.0 L55.5,126.0 L52.5,126.0 Z" fill="#d0d0d0"/>
<path d="M11,141 L15.8,135.5 L24.5,135.5 L24.5,139.5 L18.8,146 L11,146 Z" fill="#dcdcdc"/>
<path d="M11,141 H19 L24.5,135.5 M19,141 V146" fill="none" stroke="#8a8a8a" stroke-width="0.7"/>
<path d="M28,145.5 L28,148.5 L25,148.5 Z" fill="#d0d0d0"/>
<defs><linearGradient id="gr" x1="0" x2="1" y1="0" y2="0"><stop offset="0" stop-color="#2a2a2a"/><stop offset="1" stop-color="#c8c8c8"/></linearGradient></defs>
<rect x="37.8" y="136.8" width="12.6" height="9" fill="url(#gr)" stroke="#dcdcdc" stroke-width="1.5"/>
<path d="M55.5,145.0 L55.5,148.0 L52.5,148.0 Z" fill="#d0d0d0"/>
<path d="M13.5,160 Q13,156.3 17,156.2 L22.8,156.2 L22.8,162 Q22.8,166 18.5,166 Q14.5,166 14,162 Z" fill="#dcdcdc"/>
<path d="M11.8,169 L16.2,162.5" stroke="#dcdcdc" stroke-width="2" stroke-linecap="round"/>
<path d="M15.5,163 L18,160" stroke="#6a6a6a" stroke-width="0.8"/>
<path d="M28,167.5 L28,170.5 L25,170.5 Z" fill="#d0d0d0"/>
<circle cx="42.6" cy="161" r="3.9" fill="#c0c0c0" stroke="#dcdcdc" stroke-width="1.2"/>
<path d="M45.5,164 L51.3,169.5" stroke="#dcdcdc" stroke-width="1.8" stroke-linecap="round"/>
<path d="M56,167.0 L56,170.0 L53,170.0 Z" fill="#d0d0d0"/>
<rect x="6" y="174" width="50" height="1" fill="#3e3e3e"/><rect x="6" y="175" width="50" height="0.8" fill="#5c5c5c"/>
<path d="M10.5,193 L12.5,186 L18,181.5 L22,185.5 L17.5,191 Z" fill="#dcdcdc"/>
<path d="M19,180.2 L21,178.5 L24.5,182 L22.8,184 Z" fill="#dcdcdc"/>
<path d="M11,192.5 L15.5,188" stroke="#5a5a5a" stroke-width="0.8"/><circle cx="16" cy="187.6" r="0.9" fill="#3a3a3a"/>
<path d="M28,192.5 L28,195.5 L25,195.5 Z" fill="#d0d0d0"/>
<path d="M39.2,184 V181.2 H49.6 V184 M44.4,181.2 V191.7 M42.2,191.7 H46.6" fill="none" stroke="#dcdcdc" stroke-width="1.4"/>
<path d="M56,192.5 L56,195.5 L53,195.5 Z" fill="#d0d0d0"/>
<path d="M12.6,202 L12.6,213.2 L15.5,210.2 L17.8,215 L19.3,214.2 L17.2,209.8 L21,209.6 Z" fill="none" stroke="#dcdcdc" stroke-width="1.3" stroke-linejoin="round"/>
<path d="M13.6,205 L13.6,211 L19,209" fill="#2a2a2a"/>
<path d="M28,214.5 L28,217.5 L25,217.5 Z" fill="#d0d0d0"/>
<path d="M39.5,214 L50,203.5" stroke="#dcdcdc" stroke-width="1.6" stroke-linecap="round"/>
<path d="M56,214.5 L56,217.5 L53,217.5 Z" fill="#d0d0d0"/>
<rect x="6" y="220" width="50" height="1" fill="#3e3e3e"/><rect x="6" y="221" width="50" height="0.8" fill="#5c5c5c"/>
<rect x="6" y="240.5" width="50" height="0.8" fill="#4a4a4a"/>
<path d="M13,239.5 L9.5,233.6 Q9.5,232.3 10.8,232.6 L13.2,235 L13,228.5 Q13.2,227 14.3,227.2 Q15.2,227.5 15.3,229 L15.6,233 L16.3,226.6 Q16.6,225.6 17.5,225.8 Q18.4,226 18.3,227.2 L18.2,233 L19.6,227.5 Q20,226.6 20.9,226.8 Q21.7,227.2 21.4,228.5 L20.5,233.5 L22.1,230.2 Q22.6,229.3 23.4,229.7 Q24,230.2 23.6,231.5 L21.5,239.5 Z" fill="#dcdcdc"/>
<path d="M28,237.5 L28,240.5 L25,240.5 Z" fill="#d0d0d0"/>
<circle cx="43" cy="231.5" r="4.3" fill="#9a9a9a" stroke="#dcdcdc" stroke-width="1.4"/>
<path d="M46.3,234.8 L50.8,239.3" stroke="#dcdcdc" stroke-width="2.2" stroke-linecap="round"/>
<rect x="24.5" y="260.5" width="21.3" height="22" fill="#1e1e1e"/><rect x="25.5" y="261.5" width="19.3" height="20" fill="#ffffff"/>
<rect x="11.8" y="247.3" width="22" height="21.4" fill="#1e1e1e"/><rect x="12.8" y="248.3" width="20" height="19.4" fill="#f3d3c3"/><rect x="13.8" y="249.3" width="18" height="17.4" fill="#e88a5c"/>
<path d="M39.5,249 Q44,248.5 45.5,252.5" fill="none" stroke="#dcdcdc" stroke-width="1.1"/>
<path d="M38.5,249 L41,247 L41,251 Z M45.5,254.8 L43.5,252.3 L47.5,252.3 Z" fill="#dcdcdc"/>
<rect x="13.5" y="278" width="5.5" height="6" fill="#dcdcdc"/>
<rect x="10.8" y="275" width="5.8" height="6" fill="#1e1e1e" stroke="#dcdcdc" stroke-width="0.8"/>
<rect x="9.2" y="294.3" width="14.2" height="10.6" fill="#1e1e1e" stroke="#dcdcdc" stroke-width="1.1"/>
<circle cx="16.3" cy="299.6" r="3" fill="#3a3a3a" stroke="#b0b0b0" stroke-width="0.8" stroke-dasharray="1,0.8"/>
<rect x="37.3" y="297.5" width="9.2" height="7.2" fill="#8a8a8a" stroke="#dcdcdc" stroke-width="1.1"/>
<rect x="41.2" y="294.9" width="9.7" height="7.6" fill="#8a8a8a" stroke="#dcdcdc" stroke-width="1.1"/>
<path d="M55.5,305.0 L55.5,308.0 L52.5,308.0 Z" fill="#d0d0d0"/>
</svg>
</body></html>
